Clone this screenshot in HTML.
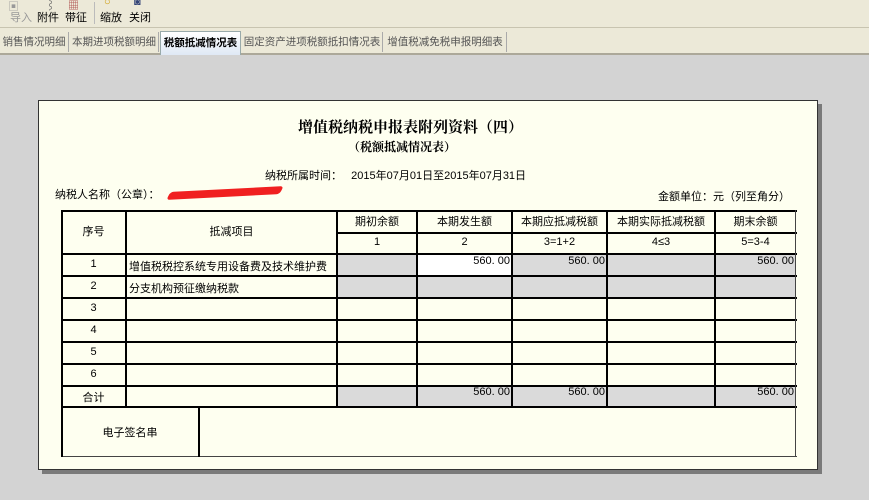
<!DOCTYPE html>
<html><head><meta charset="utf-8"><style>
*{margin:0;padding:0;box-sizing:border-box}
body{width:869px;height:500px;overflow:hidden;background:#d3d3d3;font-family:"Liberation Sans","Noto Sans CJK SC","WenQuanYi Zen Hei",sans-serif;font-size:11px;color:#000;position:relative}
.tb{position:absolute;left:0;top:0;width:869px;height:28px;background:#ece9d8;border-bottom:1px solid #c8c4b0}
.tb span{position:absolute;top:8px;font-size:11px}
.tabs{position:absolute;left:0;top:28px;width:869px;height:27px;background:#ece9d8;border-bottom:2px solid #aca899}
.tab{position:absolute;top:4px;height:20px;line-height:20px;font-size:10.5px;color:#555;border-right:1px solid #aaa;text-align:center;white-space:nowrap;overflow:hidden}
.tab.act{background:linear-gradient(#fff,#dfe9f5);border:1px solid #9aa;border-bottom:none;color:#000;font-weight:bold;top:3px;height:24px;line-height:22px}
.paper{position:absolute;left:38px;top:100px;width:780px;height:370px;background:#fefff0;border:1px solid #333;box-shadow:4px 4px 0 #7a7a7a}
.a{position:absolute;white-space:nowrap}
.h{position:absolute;background:#000;height:2px}
.v{position:absolute;background:#000;width:2px}
.g{position:absolute;background:#dadada}
.w{position:absolute;background:#fff}
.c{position:absolute;text-align:center;font-size:11px;white-space:nowrap}
.r{position:absolute;text-align:right;font-size:11px;white-space:pre}
</style></head><body>
<div class="tb">
<span style="left:8px;top:-2px;color:#999">▣</span><span style="left:10px;top:9px;color:#999">导入</span>
<span style="left:45px;top:-3px;color:#666">⌇</span><span style="left:37px;top:9px">附件</span>
<span style="left:68px;top:-3px;color:#a44">▦</span><span style="left:65px;top:9px">带征</span>
<div style="position:absolute;left:94px;top:2px;width:1px;height:22px;background:#bbb"></div>
<span style="left:104px;top:-4px;color:#c90">○</span><span style="left:100px;top:9px">缩放</span>
<span style="left:134px;top:-4px;color:#347">◙</span><span style="left:129px;top:9px">关闭</span>
</div>
<div class="tabs">
<div class="tab" style="left:0;width:69px">销售情况明细</div>
<div class="tab" style="left:70px;width:89px">本期进项税额明细</div>
<div class="tab act" style="left:160px;width:81px">税额抵减情况表</div>
<div class="tab" style="left:242px;width:141px">固定资产进项税额抵扣情况表</div>
<div class="tab" style="left:384px;width:123px">增值税减免税申报明细表</div>
</div>
<div class="paper"></div>
<div class="a" style="left:298px;top:116px;font-size:15px;font-weight:bold;font-family:'Noto Serif CJK SC',serif">增值税纳税申报表附列资料（四）</div>
<div class="a" style="left:348px;top:138px;font-size:12px;font-weight:bold;font-family:'Noto Serif CJK SC',serif">（税额抵减情况表）</div>
<div class="a" style="left:265px;top:167px">纳税所属时间：&nbsp;&nbsp;&nbsp;2015年07月01日至2015年07月31日</div>
<div class="a" style="left:55px;top:186px">纳税人名称（公章）：</div>
<div style="position:absolute;left:170px;top:189px;width:110px;height:8px;background:#f02020;transform:skewX(-30deg) rotate(-3deg);border-radius:3px"></div>
<div class="a" style="left:658px;top:188px">金额单位：元（列至角分）</div>

<div class="g" style="left:337px;top:254px;width:80px;height:22px"></div>
<div class="w" style="left:417px;top:254px;width:95px;height:22px"></div>
<div class="g" style="left:512px;top:254px;width:284px;height:22px"></div>
<div class="g" style="left:337px;top:276px;width:459px;height:22px"></div>
<div class="g" style="left:337px;top:386px;width:459px;height:21px"></div>

<div class="h" style="left:61px;top:210px;width:736px"></div>
<div class="h" style="left:337px;top:232px;width:460px"></div>
<div class="h" style="left:61px;top:253px;width:736px"></div>
<div class="h" style="left:61px;top:275px;width:736px"></div>
<div class="h" style="left:61px;top:297px;width:736px"></div>
<div class="h" style="left:61px;top:319px;width:736px"></div>
<div class="h" style="left:61px;top:341px;width:736px"></div>
<div class="h" style="left:61px;top:363px;width:736px"></div>
<div class="h" style="left:61px;top:385px;width:736px"></div>
<div class="h" style="left:61px;top:406px;width:736px"></div>
<div class="h" style="left:61px;top:456px;width:736px;height:1px;background:#444"></div>
<div class="v" style="left:61px;top:210px;height:247px"></div>
<div class="v" style="left:125px;top:210px;height:197px"></div>
<div class="v" style="left:336px;top:210px;height:197px"></div>
<div class="v" style="left:416px;top:210px;height:197px"></div>
<div class="v" style="left:511px;top:210px;height:197px"></div>
<div class="v" style="left:606px;top:210px;height:197px"></div>
<div class="v" style="left:714px;top:210px;height:197px"></div>
<div class="v" style="left:795px;top:210px;height:247px;width:1px;background:#444"></div>
<div class="v" style="left:198px;top:406px;height:51px"></div>

<div class="c" style="left:61px;top:223px;width:65px">序号</div>
<div class="c" style="left:126px;top:223px;width:211px">抵减项目</div>
<div class="c" style="left:337px;top:213px;width:80px">期初余额</div>
<div class="c" style="left:417px;top:213px;width:95px">本期发生额</div>
<div class="c" style="left:512px;top:213px;width:95px">本期应抵减税额</div>
<div class="c" style="left:607px;top:213px;width:108px">本期实际抵减税额</div>
<div class="c" style="left:715px;top:213px;width:81px">期末余额</div>
<div class="c" style="left:337px;top:236px;width:80px">1</div>
<div class="c" style="left:417px;top:236px;width:95px">2</div>
<div class="c" style="left:512px;top:236px;width:95px">3=1+2</div>
<div class="c" style="left:607px;top:236px;width:108px">4≤3</div>
<div class="c" style="left:715px;top:236px;width:81px">5=3-4</div>
<div class="c" style="left:61px;top:258px;width:65px">1</div>
<div class="c" style="left:61px;top:280px;width:65px">2</div>
<div class="c" style="left:61px;top:302px;width:65px">3</div>
<div class="c" style="left:61px;top:324px;width:65px">4</div>
<div class="c" style="left:61px;top:346px;width:65px">5</div>
<div class="c" style="left:61px;top:368px;width:65px">6</div>
<div class="c" style="left:61px;top:389px;width:65px">合计</div>
<div class="a" style="left:129px;top:258px">增值税税控系统专用设备费及技术维护费</div>
<div class="a" style="left:129px;top:280px">分支机构预征缴纳税款</div>
<div class="r" style="left:417px;top:255px;width:93px">560. 00</div>
<div class="r" style="left:512px;top:255px;width:93px">560. 00</div>
<div class="r" style="left:715px;top:255px;width:79px">560. 00</div>
<div class="r" style="left:417px;top:386px;width:93px">560. 00</div>
<div class="r" style="left:512px;top:386px;width:93px">560. 00</div>
<div class="r" style="left:715px;top:386px;width:79px">560. 00</div>
<div class="c" style="left:61px;top:424px;width:138px">电子签名串</div>
</body></html>
